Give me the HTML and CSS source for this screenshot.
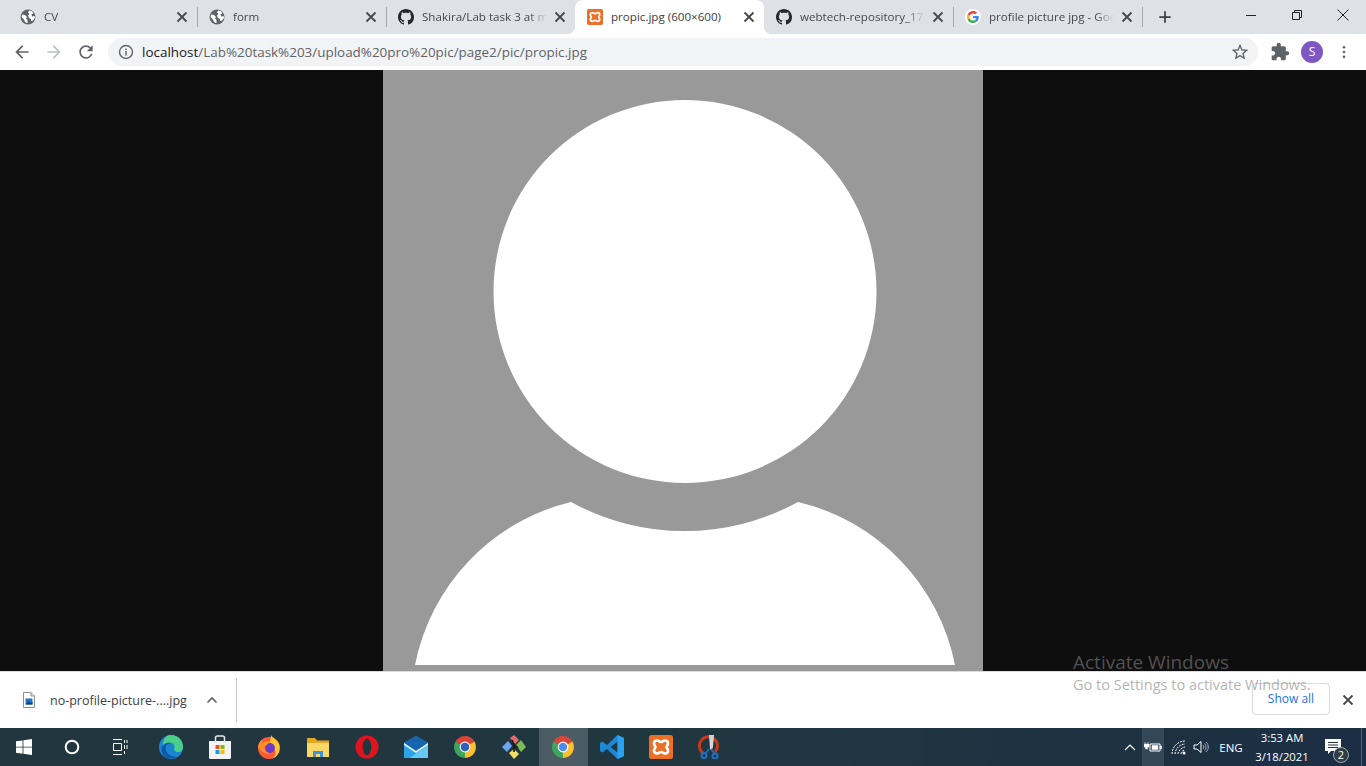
FILE: index.html
```html
<!DOCTYPE html>
<html lang="en">

<head>
    <meta charset="UTF-8">
    <title>propic.jpg (600×600)</title>
    <link rel="stylesheet" href="styles.css">
</head>

<body>
    <svg class="sprite" aria-hidden="true">
        <symbol id="globe" viewBox="0 0 16 16">
            <circle cx="8" cy="8" r="7.5" fill="#5f6368" />
            <path d="M2 5.5l3 .5 2 2-1 1.5 1.5 1.5V14l-2-.5L3.500 10 1.500 8zM9 1.500l2.500.5 2 2-2 1.500 .5 2 2.500-.5 .5 2-2 2.500-2 .5v-2l-2-1-1-2.500 1.500-1.500L8 3.500z" fill="#fff" />
        </symbol>
        <symbol id="github" viewBox="0 0 16 16">
            <path fill="#24292e" d="M8 0C3.58 0 0 3.58 0 8c0 3.54 2.29 6.530 5.470 7.590.4.07.55-.17.55-.38 0-.19-.01-.82-.01-1.490-2.010.37-2.530-.49-2.690-.94-.09-.23-.48-.94-.82-1.130-.28-.15-.68-.52-.01-.53.63-.01 1.080.58 1.230.82.72 1.210 1.870.87 2.330.66.07-.52.28-.87.51-1.070-1.780-.2-3.640-.89-3.640-3.950 0-.87.31-1.590.82-2.150-.08-.2-.36-1.020.08-2.120 0 0 .67-.21 2.200.82.64-.18 1.320-.27 2-.27.68 0 1.360.09 2 .27 1.530-1.040 2.200-.82 2.200-.82.44 1.100.16 1.920.08 2.120.51.56.82 1.270.82 2.150 0 3.070-1.870 3.750-3.650 3.950.29.25.54.73.54 1.480 0 1.070-.01 1.930-.01 2.200 0 .21.15.46.55.38A8.013 8.013 0 0016 8c0-4.420-3.580-8-8-8z" />
        </symbol>
        <symbol id="xampp" viewBox="0 0 24 24">
            <rect width="24" height="24" rx="2.500" fill="#ec6f26" />
            <path d="M8 5.500c2 0 2.500 1.500 4 1.500s2-1.500 4-1.500c2 0 3 1 3 3 0 2-1.500 2-1.500 3.500s1.500 1.500 1.500 3.500c0 2-1 3-3 3-2 0-2.500-1.500-4-1.500S10 18.500 8 18.500c-2 0-3-1-3-3 0-2 1.500-2 1.500-3.500S5 10.500 5 8.500c0-2 1-3 3-3z" fill="none" stroke="#fff" stroke-width="2.600" />
        </symbol>
        <symbol id="close" viewBox="0 0 16 16">
            <path d="M3.500 3.500l9 9M12.500 3.500l-9 9" stroke="#45484c" stroke-width="1.800" fill="none" />
        </symbol>
        <symbol id="chrome" viewBox="0 0 24 24">
            <path d="M2.500 6.500A11 11 0 0121.500 6.500L12 12z" fill="#db4437" />
            <path d="M21.500 6.500A11 11 0 0112 23L12 12z" fill="#fbc02d" />
            <path d="M12 23A11 11 0 012.500 6.500L12 12z" fill="#3ba55c" />
            <circle cx="12" cy="12" r="5.400" fill="#fff" />
            <circle cx="12" cy="12" r="4.200" fill="#4d8bf0" />
        </symbol>
    </svg>

    <!-- tab strip -->
    <header class="tabstrip">
        <div class="tab sep">
            <svg class="favicon"><use href="#globe" /></svg>
            <span class="tab-title">CV</span>
            <svg class="tab-close"><use href="#close" /></svg>
        </div>
        <div class="tab sep">
            <svg class="favicon"><use href="#globe" /></svg>
            <span class="tab-title">form</span>
            <svg class="tab-close"><use href="#close" /></svg>
        </div>
        <div class="tab">
            <svg class="favicon"><use href="#github" /></svg>
            <span class="tab-title">Shakira/Lab task 3 at m</span>
            <svg class="tab-close"><use href="#close" /></svg>
        </div>
        <div class="tab active">
            <svg class="favicon"><use href="#xampp" /></svg>
            <span class="tab-title">propic.jpg (600×600)</span>
            <svg class="tab-close"><use href="#close" /></svg>
        </div>
        <div class="tab sep">
            <svg class="favicon"><use href="#github" /></svg>
            <span class="tab-title">webtech-repository_17-</span>
            <svg class="tab-close"><use href="#close" /></svg>
        </div>
        <div class="tab sep">
            <svg class="favicon" viewBox="-8 -8 64 64">
                <circle cx="24" cy="24" r="32" fill="#fff" />
                <path fill="#EA4335" d="M24 9.500c3.540 0 6.710 1.220 9.210 3.600l6.850-6.850C35.900 2.380 30.470 0 24 0 14.620 0 6.510 5.380 2.560 13.220l7.980 6.190C12.430 13.720 17.740 9.500 24 9.500z" />
                <path fill="#4285F4" d="M46.980 24.550c0-1.570-.15-3.090-.38-4.550H24v9.020h12.940c-.58 2.960-2.260 5.480-4.780 7.180l7.730 6c4.510-4.180 7.090-10.360 7.090-17.650z" />
                <path fill="#FBBC05" d="M10.530 28.590c-.48-1.450-.76-2.990-.76-4.590s.27-3.140.76-4.590l-7.980-6.190C.92 16.460 0 20.120 0 24c0 3.880.92 7.540 2.560 10.780l7.970-6.190z" />
                <path fill="#34A853" d="M24 48c6.480 0 11.930-2.130 15.890-5.810l-7.730-6c-2.150 1.450-4.920 2.300-8.160 2.300-6.260 0-11.570-4.220-13.470-9.910l-7.980 6.190C6.510 42.620 14.620 48 24 48z" />
            </svg>
            <span class="tab-title">profile picture jpg - Goo</span>
            <svg class="tab-close"><use href="#close" /></svg>
        </div>
        <svg class="newtab" viewBox="0 0 16 16">
            <path d="M8 1.500v13M1.500 8h13" stroke="#3c4043" stroke-width="2" fill="none" />
        </svg>
        <div class="winctrls">
            <div class="winbtn"><svg viewBox="0 0 12 12"><path d="M1 6.500h10" stroke="#222" fill="none" /></svg></div>
            <div class="winbtn"><svg viewBox="0 0 12 12"><path d="M1.500 3.500h7v7h-7zM3.500 3.500v-2h7v7h-2" stroke="#222" fill="none" /></svg></div>
            <div class="winbtn"><svg viewBox="0 0 12 12"><path d="M.5.500l11 11M11.500.500l-11 11" stroke="#222" fill="none" /></svg></div>
        </div>
    </header>

    <!-- toolbar -->
    <nav class="toolbar">
        <div class="tool"><svg viewBox="0 0 24 24"><path fill="#5f6368" d="M20 11H7.830l5.590-5.590L12 4l-8 8 8 8 1.410-1.410L7.830 13H20v-2z" /></svg></div>
        <div class="tool"><svg viewBox="0 0 24 24"><path fill="#bcc0c4" d="M4 11h12.170l-5.590-5.590L12 4l8 8-8 8-1.410-1.410L16.170 13H4v-2z" /></svg></div>
        <div class="tool"><svg viewBox="0 0 24 24"><path fill="#5f6368" d="M17.650 6.350A7.958 7.958 0 0012 4c-4.420 0-7.990 3.580-7.990 8s3.570 8 7.990 8c3.730 0 6.840-2.550 7.730-6h-2.080A5.990 5.990 0 0112 18c-3.310 0-6-2.690-6-6s2.690-6 6-6c1.660 0 3.140.69 4.220 1.780L13 11h7V4l-2.350 2.350z" /></svg></div>
        <div class="omnibox">
            <svg class="info" viewBox="0 0 16 16">
                <circle cx="8" cy="8" r="6.500" fill="none" stroke="#5f6368" stroke-width="1.400" />
                <path d="M7.300 7h1.400v4.500H7.300zM7.300 4.500h1.400v1.400H7.300z" fill="#5f6368" />
            </svg>
            <span class="url"><span class="host">localhost</span>/Lab%20task%203/upload%20pro%20pic/page2/pic/propic.jpg</span>
            <svg class="star" viewBox="0 0 24 24"><path fill="#5f6368" d="M22 9.240l-7.190-.62L12 2 9.190 8.630 2 9.240l5.460 4.730L5.820 21 12 17.270 18.180 21l-1.630-7.030L22 9.240zM12 15.400l-3.760 2.270 1-4.280-3.320-2.880 4.380-.38L12 6.100l1.710 4.040 4.380.38-3.320 2.880 1 4.280L12 15.400z" /></svg>
        </div>
        <div class="tool ext"><svg viewBox="0 0 24 24"><path fill="#5f6368" d="M20.500 11H19V7c0-1.100-.9-2-2-2h-4V3.500C13 2.120 11.880 1 10.500 1S8 2.120 8 3.500V5H4c-1.100 0-1.990.9-1.990 2v3.800H3.500c1.490 0 2.700 1.210 2.700 2.700s-1.210 2.700-2.700 2.700H2V20c0 1.100.9 2 2 2h3.800v-1.500c0-1.490 1.210-2.700 2.700-2.700 1.490 0 2.700 1.210 2.700 2.700V22H17c1.100 0 2-.9 2-2v-4h1.500c1.380 0 2.500-1.120 2.500-2.500S21.880 11 20.500 11z" /></svg></div>
        <div class="tool"><span class="avatar">S</span></div>
        <div class="tool"><svg class="dots" viewBox="0 0 4 16"><circle cx="2" cy="2.500" r="1.500" fill="#5f6368" /><circle cx="2" cy="8" r="1.500" fill="#5f6368" /><circle cx="2" cy="13.500" r="1.500" fill="#5f6368" /></svg></div>
    </nav>

    <!-- image viewer -->
    <main class="viewer">
        <svg class="propic" viewBox="0 0 600 601">
            <rect width="600" height="601" fill="#999" />
            <circle cx="302" cy="221.500" r="191.500" fill="#fff" />
            <path d="M32 595A209 209 0 01188 432A236.600 236.600 0 00415 432A209 209 0 01572 595z" fill="#fff" />
        </svg>
    </main>

    <!-- download shelf -->
    <section class="shelf">
        <div class="download">
            <svg class="fileicon" viewBox="0 0 12 16">
                <path d="M.5.500h7.500l3.500 3.500v11.500H.5z" fill="#fff" stroke="#8a8f96" />
                <path d="M8 .500v3.500h3.500" fill="#e3e5e8" stroke="#8a8f96" />
                <rect x="2.500" y="6.500" width="7" height="6" fill="#1a73c8" />
                <path d="M2.500 12.500l3-3 2 1.500 2-1v2.500z" fill="#0c3f78" />
            </svg>
            <span class="filename">no-profile-picture-....jpg</span>
            <svg class="chevron" viewBox="0 0 12 8"><path d="M1.500 6.500L6 2l4.500 4.500" fill="none" stroke="#5f6368" stroke-width="1.600" /></svg>
        </div>
        <div class="showall">Show all</div>
        <svg class="shelf-close"><use href="#close" /></svg>
    </section>

    <!-- taskbar -->
    <footer class="taskbar">
        <div class="task"><svg class="ic16" viewBox="0 0 16 16"><path fill="#fff" d="M0 2.300l6.600-.9v6.300H0zM7.400 1.300L16 0v7.700H7.400zM0 8.400h6.600v6.300L0 13.700zM7.400 8.400H16V16l-8.600-1.200z" /></svg></div>
        <div class="task"><svg class="ic16" viewBox="0 0 16 16"><circle cx="8" cy="8" r="6.300" fill="none" stroke="#fff" stroke-width="2" /></svg></div>
        <div class="task"><svg class="ic16" viewBox="0 0 16 16"><path fill="none" stroke="#fff" d="M1 .5h9M1 15.500h9M1.500 4.500h8v7h-8zM12.500 1v3M12.500 12v3M15 1v3M15 6v4M12.500 6v4" /></svg></div>

        <div class="task app first">
            <svg viewBox="0 0 24 24">
                <circle cx="12" cy="12" r="12" fill="#1a86d0" />
                <path d="M12 0c7 0 12 5 12 12 0 3-2 5-5 5-2.500 0-4-1.500-4-3 2-3-1-7-5-6-3 .6-5 3-5.500 5C3 8 5 0 12 0z" fill="#4ad08a" />
                <path d="M6.500 13c0 5 5 9 11 8.400-3 2.500-8 3-11.500.6-2.500-2-3.500-5-3.500-8.500C4 8 9 7 12 8c-3 1-5.500 2-5.500 5z" fill="#0f5aa8" />
            </svg>
        </div>
        <div class="task app">
            <svg viewBox="0 0 24 24">
                <path d="M1 6h22v16.500a1.500 1.500 0 01-1.500 1.500h-19A1.500 1.500 0 011 22.500z" fill="#f3f3f3" />
                <path d="M7.500 8V3a2 2 0 012-2h5a2 2 0 012 2v5" fill="none" stroke="#e8e8e8" stroke-width="1.500" />
                <rect x="7.500" y="10" width="4" height="4" fill="#f25022" />
                <rect x="12.500" y="10" width="4" height="4" fill="#7fba00" />
                <rect x="7.500" y="15" width="4" height="4" fill="#00a4ef" />
                <rect x="12.500" y="15" width="4" height="4" fill="#ffb900" />
            </svg>
        </div>
        <div class="task app">
            <svg viewBox="0 0 24 24">
                <circle cx="12" cy="13" r="11" fill="#ff5a36" />
                <path d="M14 0c1 3 6 4 8 9 2 6-1 13-7 14.500 5-3 4-8 1-11-1-2-3-3-3-5 0-3 1-5 1-7.500z" fill="#ffc82e" />
                <path d="M1 13c0-4 2-7 4-8 0 2 1 3 2 3 2-2 5-2 7-1-3 .5-4 2-4 3 2 .5 5 0 6 2 .5 4-3 7-6 6.500-5-.5-8-5-9-5.500z" fill="#ff8a2b" />
                <circle cx="13" cy="13" r="5" fill="#6e3bc4" />
                <path d="M6 8c2-2 6-2 8-.5-2 0-4 1-4.500 3C8 10.500 7 9.500 6 8z" fill="#ff9a2e" />
            </svg>
        </div>
        <div class="task app">
            <svg viewBox="0 0 24 24">
                <path d="M1 3h8l2 2.500h12V22H1z" fill="#e3a820" />
                <path d="M1 8h22v14H1z" fill="#fbd767" />
                <path d="M7 22v-6h10v6h-3v-3h-4v3z" fill="#3a96dd" />
            </svg>
        </div>
        <div class="task app">
            <svg viewBox="0 0 24 24">
                <path fill-rule="evenodd" d="M12 .5a11.500 11.500 0 110 23 11.500 11.500 0 010-23zM12 3.800c-2.500 0-4.300 3.600-4.300 8.200s1.800 8.200 4.300 8.200 4.300-3.600 4.300-8.200-1.800-8.200-4.300-8.200z" fill="#e0141c" />
            </svg>
        </div>
        <div class="task app">
            <svg viewBox="0 0 24 24">
                <path d="M0 8L12 1l12 7v15H0z" fill="#2ba5e8" />
                <path d="M0 8L12 1l12 7-12 8z" fill="#1566ae" />
                <path d="M0 8l12 8 12-8v2l-12 8L0 10z" fill="#e6f6fd" />
                <path d="M24 10v13H6z" fill="#63c9f5" />
            </svg>
        </div>
        <div class="task app">
            <svg viewBox="0 0 24 24"><use href="#chrome" /><circle cx="12" cy="12" r="4.200" fill="#2e62b8" /></svg>
        </div>
        <div class="task app">
            <svg viewBox="0 0 24 24">
                <path d="M8 3l4-3 5 5-4 4z" fill="#e76a6a" />
                <path d="M14 10l5-5 5 7-5 5z" fill="#7dbb54" />
                <path d="M7 18l5-4 5 5-5 5z" fill="#f3dc6b" />
                <path d="M0 12l6-6 4 5-5 6z" fill="#6fa5f5" />
                <path d="M10 5l2 5v7M12 10l4 3" fill="none" stroke="#1a1a1a" stroke-width="1.700" />
            </svg>
        </div>
        <div class="task app active">
            <svg viewBox="0 0 24 24"><use href="#chrome" /></svg>
        </div>
        <div class="task app">
            <svg viewBox="0 0 24 24">
                <path d="M17.500 0L24 3v18l-6.500 3L7 14l-4.500 3.500L0 16V8l2.500-1.500L7 10z" fill="#1e88d8" />
                <path d="M17.500 6.500L10.500 12l7 5.500z" fill="#203640" />
                <path d="M17.500 0L24 3v18l-6.500 3z" fill="#2aa3ef" />
            </svg>
        </div>
        <div class="task app">
            <svg viewBox="0 0 24 24"><use href="#xampp" /></svg>
        </div>
        <div class="task app">
            <svg viewBox="0 0 24 24">
                <path d="M5 18A9 9 0 1117 17" fill="none" stroke="#c8391c" stroke-width="3" />
                <path d="M11 0h5l-1 12-1.500 4L12 14z" fill="#d6d6d6" />
                <path d="M11 14l-3 4M13 14l3 4" stroke="#1e74c8" stroke-width="1.500" />
                <circle cx="6" cy="20.500" r="2.500" fill="none" stroke="#1e74c8" stroke-width="2" />
                <circle cx="17" cy="21" r="2.500" fill="none" stroke="#1e74c8" stroke-width="2" />
            </svg>
        </div>

        <div class="tray">
            <div class="tray-item wide"><svg viewBox="0 0 12 8"><path d="M1 7l5-5 5 5" fill="none" stroke="#fff" stroke-width="1.200" /></svg></div>
            <div class="tray-item lit"><svg viewBox="0 0 18 12"><path d="M6 3h10v7H6z" fill="none" stroke="#fff" /><path d="M8 4.500h6v4H8zM16 5h1.500v3H16zM0 3h5v3H3.500v2H1.500V6H0zM1 1v2M4 1v2" fill="#fff" stroke="#fff" stroke-width=".5" /></svg></div>
            <div class="tray-item gap"><svg viewBox="0 0 16 16"><path d="M1 15C1 8 7 2 14 2M4 15c0-5 5-10 10-10M7 15c0-3 4-7 7-7M10 15c0-2 2-4 4-4" fill="none" stroke="#fff" stroke-dasharray="2 1" /><circle cx="13" cy="14" r="1.500" fill="#fff" /></svg></div>
            <div class="tray-item"><svg viewBox="0 0 16 16"><path d="M1 6h3l4-3.500v11L4 10H1z" fill="none" stroke="#fff" /><path d="M10 6c1 1 1 3 0 4M11.500 4.500c2 2 2 5 0 7M13 3c3 3 3 7 0 10" fill="none" stroke="#aab" /></svg></div>
            <div class="lang">ENG</div>
            <div class="clock"><span>3:53 AM</span><span>3/18/2021</span></div>
            <div class="notif">
                <svg viewBox="0 0 16 16"><path d="M0 0h16v12H6l-3 3v-3H0z" fill="#fff" /><path d="M3 3.500h10M3 6h10M3 8.500h10" stroke="#203640" /></svg>
                <span class="badge">2</span>
            </div>
            <div class="show-desktop"></div>
        </div>
    </footer>

    <div class="activate">
        <p class="activate-big">Activate Windows</p>
        <p class="activate-small">Go to Settings to activate Windows.</p>
    </div>
</body>

</html>
```

FILE: styles.css
```css
* {
    box-sizing: border-box;
}

html,
body {
    margin: 0;
    height: 766px;
    overflow: hidden;
}

body {
    font-family: "Open Sans", "Noto Sans", sans-serif;
    display: flex;
    flex-direction: column;
    background: #fff;
}

.sprite {
    width: 0;
    height: 0;
    display: block;
    overflow: hidden;
}

/* tabs */
.tabstrip {
    height: 34px;
    background: #dee1e6;
    display: flex;
    padding-left: 8px;
    flex: none;
}

.tab {
    width: 189px;
    display: flex;
    align-items: center;
    padding: 0 7px 1px 12px;
    position: relative;
    border-radius: 8px 8px 0 0;
    color: #45484c;
}

.tab.sep::after {
    content: "";
    position: absolute;
    right: -1px;
    top: 7px;
    height: 20px;
    width: 1px;
    background: #a5a8ac;
}

.tab.active {
    background: #fff;
    color: #3c4043;
}

/* small curves where the active tab meets the toolbar */
.tab.active::before,
.tab.active::after {
    content: "";
    position: absolute;
    bottom: 0;
    width: 8px;
    height: 8px;
}

.tab.active::before {
    left: -8px;
    background: radial-gradient(circle at 0 0, #dee1e6 8px, #fff 8.5px);
}

.tab.active::after {
    right: -8px;
    background: radial-gradient(circle at 100% 0, #dee1e6 8px, #fff 8.5px);
}

.favicon {
    width: 16px;
    height: 16px;
    flex: none;
}

.tab-title {
    flex: 1;
    min-width: 0;
    margin: 0 0 0 8px;
    padding-right: 4px;
    font-size: 11.6px;
    white-space: nowrap;
    -webkit-mask-image: linear-gradient(to right, #000 82%, transparent 96%);
    mask-image: linear-gradient(to right, #000 82%, transparent 96%);
}

.tab.active .tab-title {
    -webkit-mask-image: none;
    mask-image: none;
}

.tab-close {
    width: 16px;
    height: 16px;
    flex: none;
}

.newtab {
    width: 14px;
    height: 14px;
    margin: 10px 0 0 16px;
    flex: none;
}

.winctrls {
    margin-left: auto;
    display: flex;
}

.winbtn {
    width: 46px;
    height: 29px;
    display: flex;
    align-items: center;
    justify-content: center;
}

.winbtn svg {
    width: 12px;
    height: 12px;
}

/* toolbar */
.toolbar {
    height: 36px;
    display: flex;
    align-items: center;
    padding-left: 6px;
    background: #fff;
    flex: none;
}

.tool {
    width: 32px;
    height: 32px;
    display: flex;
    align-items: center;
    justify-content: center;
    flex: none;
}

.tool svg {
    width: 20px;
    height: 20px;
}

.tool svg.dots {
    width: 4px;
    height: 14px;
}

.tool.ext {
    margin-left: 6px;
}

.avatar {
    width: 22px;
    height: 22px;
    border-radius: 50%;
    background: #7e57c2;
    color: #fff;
    font-size: 12px;
    text-align: center;
    line-height: 22px;
}

.omnibox {
    width: 1150px;
    height: 28px;
    margin-left: 6px;
    border-radius: 14px;
    background: #f1f3f4;
    display: flex;
    align-items: center;
    padding: 0 8px 0 10px;
    flex: none;
}

.info {
    width: 16px;
    height: 16px;
}

.url {
    margin-left: 8px;
    font-size: 13.44px;
    color: #5f6368;
    white-space: nowrap;
}

.host {
    color: #202124;
}

.star {
    width: 20px;
    height: 20px;
    margin-left: auto;
}

/* picture */
.viewer {
    height: 601px;
    background: #0e0e0e;
    display: flex;
    justify-content: center;
    flex: none;
}

.propic {
    width: 600px;
    height: 601px;
    display: block;
}

/* downloads */
.shelf {
    height: 57px;
    background: #fff;
    border-top: 1px solid #dadce0;
    display: flex;
    align-items: center;
    flex: none;
}

.download {
    width: 237px;
    height: 44px;
    display: flex;
    align-items: center;
    padding-left: 23px;
    border-right: 1px solid #c6c8ca;
}

.fileicon {
    width: 12px;
    height: 16px;
    flex: none;
}

.filename {
    margin-left: 15px;
    font-size: 12.5px;
    color: #3c4043;
    white-space: nowrap;
}

.chevron {
    width: 12px;
    height: 8px;
    margin-left: 19px;
}

.showall {
    margin-left: auto;
    margin-bottom: 2px;
    width: 78px;
    height: 32px;
    border: 1px solid #dadce0;
    border-radius: 4px;
    color: #1a73e8;
    font-size: 12px;
    text-align: center;
    line-height: 30px;
}

.shelf-close {
    width: 16px;
    height: 16px;
    margin: 0 10px;
}

/* taskbar */
.taskbar {
    height: 38px;
    display: flex;
    background: linear-gradient(to right, #22363f 0%, #203640 60%, #1b2e44 100%);
    color: #fff;
    flex: none;
}

.task {
    width: 48px;
    display: flex;
    align-items: center;
    justify-content: center;
}

.task .ic16 {
    width: 16px;
    height: 16px;
}

.task.app {
    width: 49px;
}

.task.app svg {
    width: 24px;
    height: 24px;
}

.task.first {
    margin-left: 2.5px;
}

.task.active {
    background: #4c5c65;
}

.tray {
    margin-left: auto;
    display: flex;
    align-items: center;
    height: 100%;
}

.tray-item {
    width: 22px;
    height: 100%;
    display: flex;
    align-items: center;
    justify-content: center;
}

.tray-item svg {
    width: 16px;
    height: 16px;
}

.tray-item.wide {
    width: 24px;
}

.tray-item.wide svg {
    width: 12px;
    height: 8px;
}

.tray-item.lit {
    background: #34485a;
}

.tray-item.lit svg {
    width: 18px;
    height: 14px;
}

.tray-item.gap {
    margin-left: 4px;
}

.lang {
    width: 38px;
    font-size: 11.5px;
    text-align: center;
}

.clock {
    width: 64px;
    display: flex;
    flex-direction: column;
    align-items: center;
    font-size: 11.3px;
    line-height: 19px;
}

.notif {
    width: 38px;
    height: 100%;
    position: relative;
    display: flex;
    align-items: center;
    justify-content: center;
}

.notif svg {
    width: 16px;
    height: 16px;
}

.badge {
    position: absolute;
    left: 19px;
    top: 19px;
    width: 16px;
    height: 16px;
    border-radius: 50%;
    background: #333c44;
    border: 1px solid #9aa;
    font-size: 11px;
    line-height: 14px;
    text-align: center;
}

.show-desktop {
    width: 5px;
    height: 100%;
    margin-left: 9px;
    border-left: 1px solid #56646f;
}

/* watermark lies over everything */
.activate {
    position: absolute;
    left: 1073px;
    top: 650px;
    color: rgba(128, 128, 128, 0.6);
    pointer-events: none;
}

.activate p {
    margin: 0;
    white-space: nowrap;
}

.activate-big {
    font-size: 19px;
    line-height: 25px;
}

.activate-small {
    font-size: 14.5px;
    line-height: 20px;
}
```
